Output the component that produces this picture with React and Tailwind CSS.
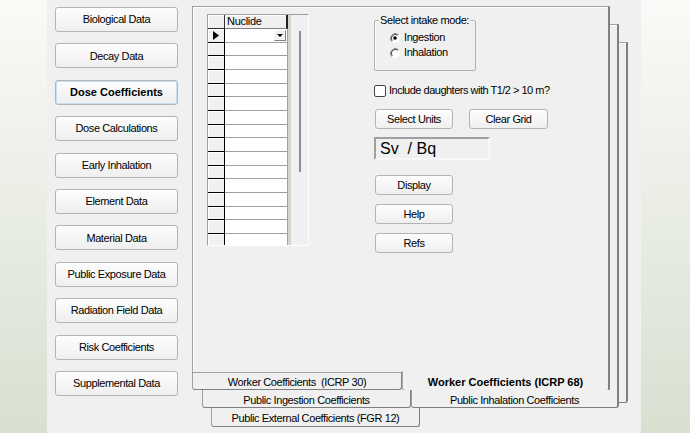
import React from 'react';

const sideItems = [
  'Biological Data',
  'Decay Data',
  'Dose Coefficients',
  'Dose Calculations',
  'Early Inhalation',
  'Element Data',
  'Material Data',
  'Public Exposure Data',
  'Radiation Field Data',
  'Risk Coefficients',
  'Supplemental Data',
];

const WinButton = ({ children, className = '' }) => (
  <div
    className={`flex items-center justify-center rounded-[3px] border border-[#b4b4b4] bg-linear-to-b from-[#fdfdfd] to-[#efefef] text-[11px] tracking-[-0.4px] text-black ${className}`}
  >
    {children}
  </div>
);

const Radio = ({ checked }) => (
  <svg width="12" height="12" viewBox="0 0 12 12" className="shrink-0">
    <circle cx="6" cy="6" r="5" fill="#fff" />
    <path d="M9.5 2.5 A5 5 0 0 0 2.5 9.5" stroke="#8a8a8a" fill="none" />
    <path d="M8.8 3.2 A4 4 0 0 0 3.2 8.8" stroke="#404040" fill="none" />
    {checked && <circle cx="6" cy="6" r="1.8" fill="#000" />}
  </svg>
);

const Grid = () => {
  const rows = Array.from({ length: 16 });
  return (
    <div className="flex h-[232px] w-[102px] overflow-hidden border border-[#a0a0a0] border-r-white border-b-white bg-[#f0f0f0]">
      <div className="flex w-[80px] flex-col">
        <div className="flex h-[14px] shrink-0">
          <div className="w-[17px] border-r border-b border-[#303030] bg-[#f0f0f0] shadow-[inset_1px_1px_0_#fff]" />
          <div className="flex flex-1 items-center border-r-2 border-b border-[#202020] border-b-[#808080] bg-[#f0f0f0] pl-[2px] text-[11px] leading-none tracking-[-0.3px] shadow-[inset_1px_1px_0_#fff]">
            Nuclide
          </div>
        </div>
        {rows.map((_, i) => (
          <div key={i} className="flex h-[13.67px] shrink-0">
            <div className="flex w-[17px] items-center justify-center border-r border-b border-black bg-[#f0f0f0] shadow-[inset_1px_1px_0_#fff]">
              {i === 0 && (
                <svg width="6" height="9" viewBox="0 0 6 9">
                  <path d="M0 0 L6 4.5 L0 9 Z" fill="#000" />
                </svg>
              )}
            </div>
            <div className="flex flex-1 items-center justify-end border-r border-b border-[#a0a0a0] bg-white">
              {i === 0 && (
                <div className="mr-[1px] flex h-[11px] w-[12px] items-center justify-center border border-[#f8f8f8] border-r-[#808080] border-b-[#808080] bg-[#f0f0f0]">
                  <svg width="6" height="3" viewBox="0 0 6 3">
                    <path d="M0 0 L6 0 L3 3 Z" fill="#000" />
                  </svg>
                </div>
              )}
            </div>
          </div>
        ))}
      </div>
      <div className="w-[3px] bg-[#d6d3cc]" />
      <div className="flex-1">
        <div className="mt-[16px] ml-[8px] h-[141px] w-[2px] bg-[#8c8c8c]" />
      </div>
    </div>
  );
};

const Controls = () => (
  <div className="ml-[65px] flex flex-col text-[11px] tracking-[-0.4px]">
    <div className="relative mt-[6px] h-[51px] w-[102px] rounded-[2px] border border-[#b0b0b0] shadow-[inset_1px_1px_0_#fff]">
      <span className="absolute -top-[7px] left-[4px] bg-[#f0f0f0] px-[1px] leading-[12px]">
        Select intake mode:
      </span>
      <div className="flex flex-col pt-[9px] pl-[14px]">
        <div className="flex h-[15px] items-center gap-[3px]">
          <Radio checked />
          <span>Ingestion</span>
        </div>
        <div className="flex h-[15px] items-center gap-[3px]">
          <Radio />
          <span>Inhalation</span>
        </div>
      </div>
    </div>

    <div className="mt-[13px] flex h-[13px] items-center gap-[3px]">
      <div className="h-[12px] w-[12px] rounded-[2px] border border-[#444] bg-white" />
      <span className="whitespace-nowrap tracking-[-0.5px]">Include daughters with T1/2 &gt; 10 m?</span>
    </div>

    <div className="mt-[12px] ml-[1px] flex gap-[16px]">
      <WinButton className="h-[20px] w-[78px]">Select Units</WinButton>
      <WinButton className="h-[20px] w-[79px]">Clear Grid</WinButton>
    </div>

    <div className="mt-[8px] flex h-[23px] w-[116px] items-center border-2 border-[#a0a0a0] border-r-[#f8f8f8] border-b-[#f8f8f8] bg-[#f0f0f0] pl-[4px] text-[16px] tracking-normal whitespace-pre">
      Sv  / Bq
    </div>

    <div className="mt-[15px] ml-[1px] flex flex-col gap-[9px]">
      <WinButton className="h-[20px] w-[78px]">Display</WinButton>
      <WinButton className="h-[20px] w-[78px]">Help</WinButton>
      <WinButton className="h-[20px] w-[78px]">Refs</WinButton>
    </div>
  </div>
);

const tabBase =
  'relative flex items-center justify-center border-[#7f7f7f] bg-[#f0f0f0] pt-[3px] text-[11px] tracking-[-0.4px] whitespace-pre';

export default function App() {
  return (
    <div className="flex h-[433px] w-[690px] overflow-hidden font-['Liberation_Sans',Arial,sans-serif] text-black">
      <div className="w-[47px] bg-linear-to-b from-[#fafaf8] to-[#d8e0d0]" />

      <div className="flex w-[594px] items-start bg-[#f0f0f0] pl-[8px]">
        <div className="mt-[7px] flex w-[123px] flex-col gap-[11.4px]">
          {sideItems.map((item) =>
            item === 'Dose Coefficients' ? (
              <WinButton
                key={item}
                className="h-[25px] border-[#3d8fe0] font-bold tracking-normal shadow-[inset_0_0_0_1px_#c4e1fa]"
              >
                {item}
              </WinButton>
            ) : (
              <WinButton key={item} className="h-[25px]">
                {item}
              </WinButton>
            )
          )}
        </div>

        <div className="relative mt-[6px] ml-[14px] flex h-[421px] w-[436px] flex-col">
          {/* pages stacked behind the front one */}
          <div className="absolute top-[36px] left-[19px] h-[361px] w-[417px] rounded-br-[3px] border-t border-r-2 border-b border-[#808080] border-t-[#a0a0a0] bg-[#f0f0f0] shadow-[inset_1px_1px_0_#fff]" />
          <div className="absolute top-[18px] left-[10px] h-[370px] w-[417px] border-t border-r-2 border-[#808080] border-t-[#a0a0a0] bg-[#f0f0f0] shadow-[inset_1px_1px_0_#fff]" />

          <div className="relative flex h-[366px] w-[418px] items-start border-t border-l border-r-2 border-[#a0a0a0] border-r-[#808080] bg-[#f0f0f0] pt-[7px] pl-[14px] shadow-[inset_1px_1px_0_#fff]">
            <Grid />
            <Controls />
          </div>

          <div className="relative flex h-[18px]">
            <div className={`${tabBase} w-[210px] rounded-b-[3px] border-t border-r border-b border-l border-t-[#a0a0a0] border-l-[#a0a0a0]`}>
              Worker Coefficients  (ICRP 30)
            </div>
            <div className={`${tabBase} -mt-px h-[20px] w-[208px] rounded-b-[3px] border-r-2 border-b border-l border-l-[#b0b0b0] font-bold tracking-normal`}>
              Worker Coefficients (ICRP 68)
            </div>
          </div>

          <div className="relative ml-[10px] flex h-[18px]">
            <div className={`${tabBase} w-[209px] rounded-b-[3px] border-r border-b border-l border-l-[#a0a0a0]`}>
              Public Ingestion Coefficients
            </div>
            <div className={`${tabBase} w-[208px] rounded-b-[3px] border-r-2 border-b border-l border-l-[#a0a0a0]`}>
              Public Inhalation Coefficients
            </div>
          </div>

          <div className="relative ml-[19px] flex h-[19px]">
            <div className={`${tabBase} w-[209px] rounded-b-[3px] border-r border-b border-l border-l-[#a0a0a0]`}>
              Public External Coefficients (FGR 12)
            </div>
          </div>
        </div>
      </div>

      <div className="flex-1 bg-linear-to-b from-[#fafaf8] to-[#d8e0d0]" />
    </div>
  );
}
